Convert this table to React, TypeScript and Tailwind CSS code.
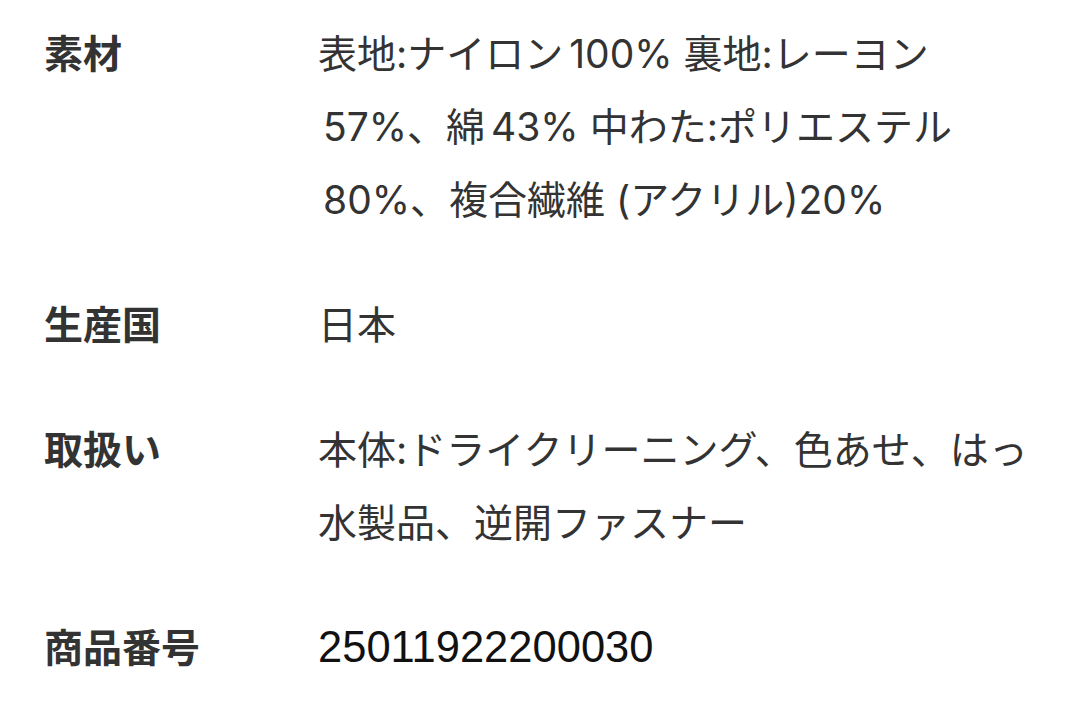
import type { ReactNode } from 'react';

// small gap between kana/kanji and a latin run, like the autospace in the screenshot
const Sp = ({ children }: { children: ReactNode }) => <span className="ml-[6px]">{children}</span>;

const rows: { label: string; lines: ReactNode[]; number?: boolean }[] = [
  {
    label: '素材',
    lines: [
      <>表地:ナイロン<Sp>100%</Sp> 裏地:レーヨン</>,
      <span className="ml-[5px]">57%、綿<Sp>43%</Sp> 中わた:ポリエステル</span>,
      <span className="ml-[5px]">80%、複合繊維 (アクリル)20%</span>,
    ],
  },
  { label: '生産国', lines: ['日本'] },
  { label: '取扱い', lines: ['本体:ドライクリーニング、色あせ、はっ', '水製品、逆開ファスナー'] },
  { label: '商品番号', lines: ['25011922200030'], number: true },
];

export default function App() {
  return (
    <div
      className="min-h-[719px] w-[1080px] bg-white pt-[17px] pl-[44px] text-[#333333]"
      style={{ fontFamily: 'Inter, "Noto Sans CJK JP", sans-serif' }}
    >
      <dl className="flex flex-col gap-[52px]">
        {rows.map(row => (
          <div key={row.label} className="flex">
            <dt className="w-[274px] shrink-0 text-[39px] leading-[73px] font-bold">{row.label}</dt>
            <dd className="flex-1">
              {row.lines.map((line, i) =>
                row.number ? (
                  <div
                    key={i}
                    className="text-[43.5px] leading-[73px] text-[#111111]"
                    style={{ fontFamily: '"Liberation Sans", Arial, sans-serif' }}
                  >
                    {line}
                  </div>
                ) : (
                  <div key={i} className="text-[39px] leading-[73px] whitespace-nowrap">
                    {line}
                  </div>
                ),
              )}
            </dd>
          </div>
        ))}
      </dl>
    </div>
  );
}
